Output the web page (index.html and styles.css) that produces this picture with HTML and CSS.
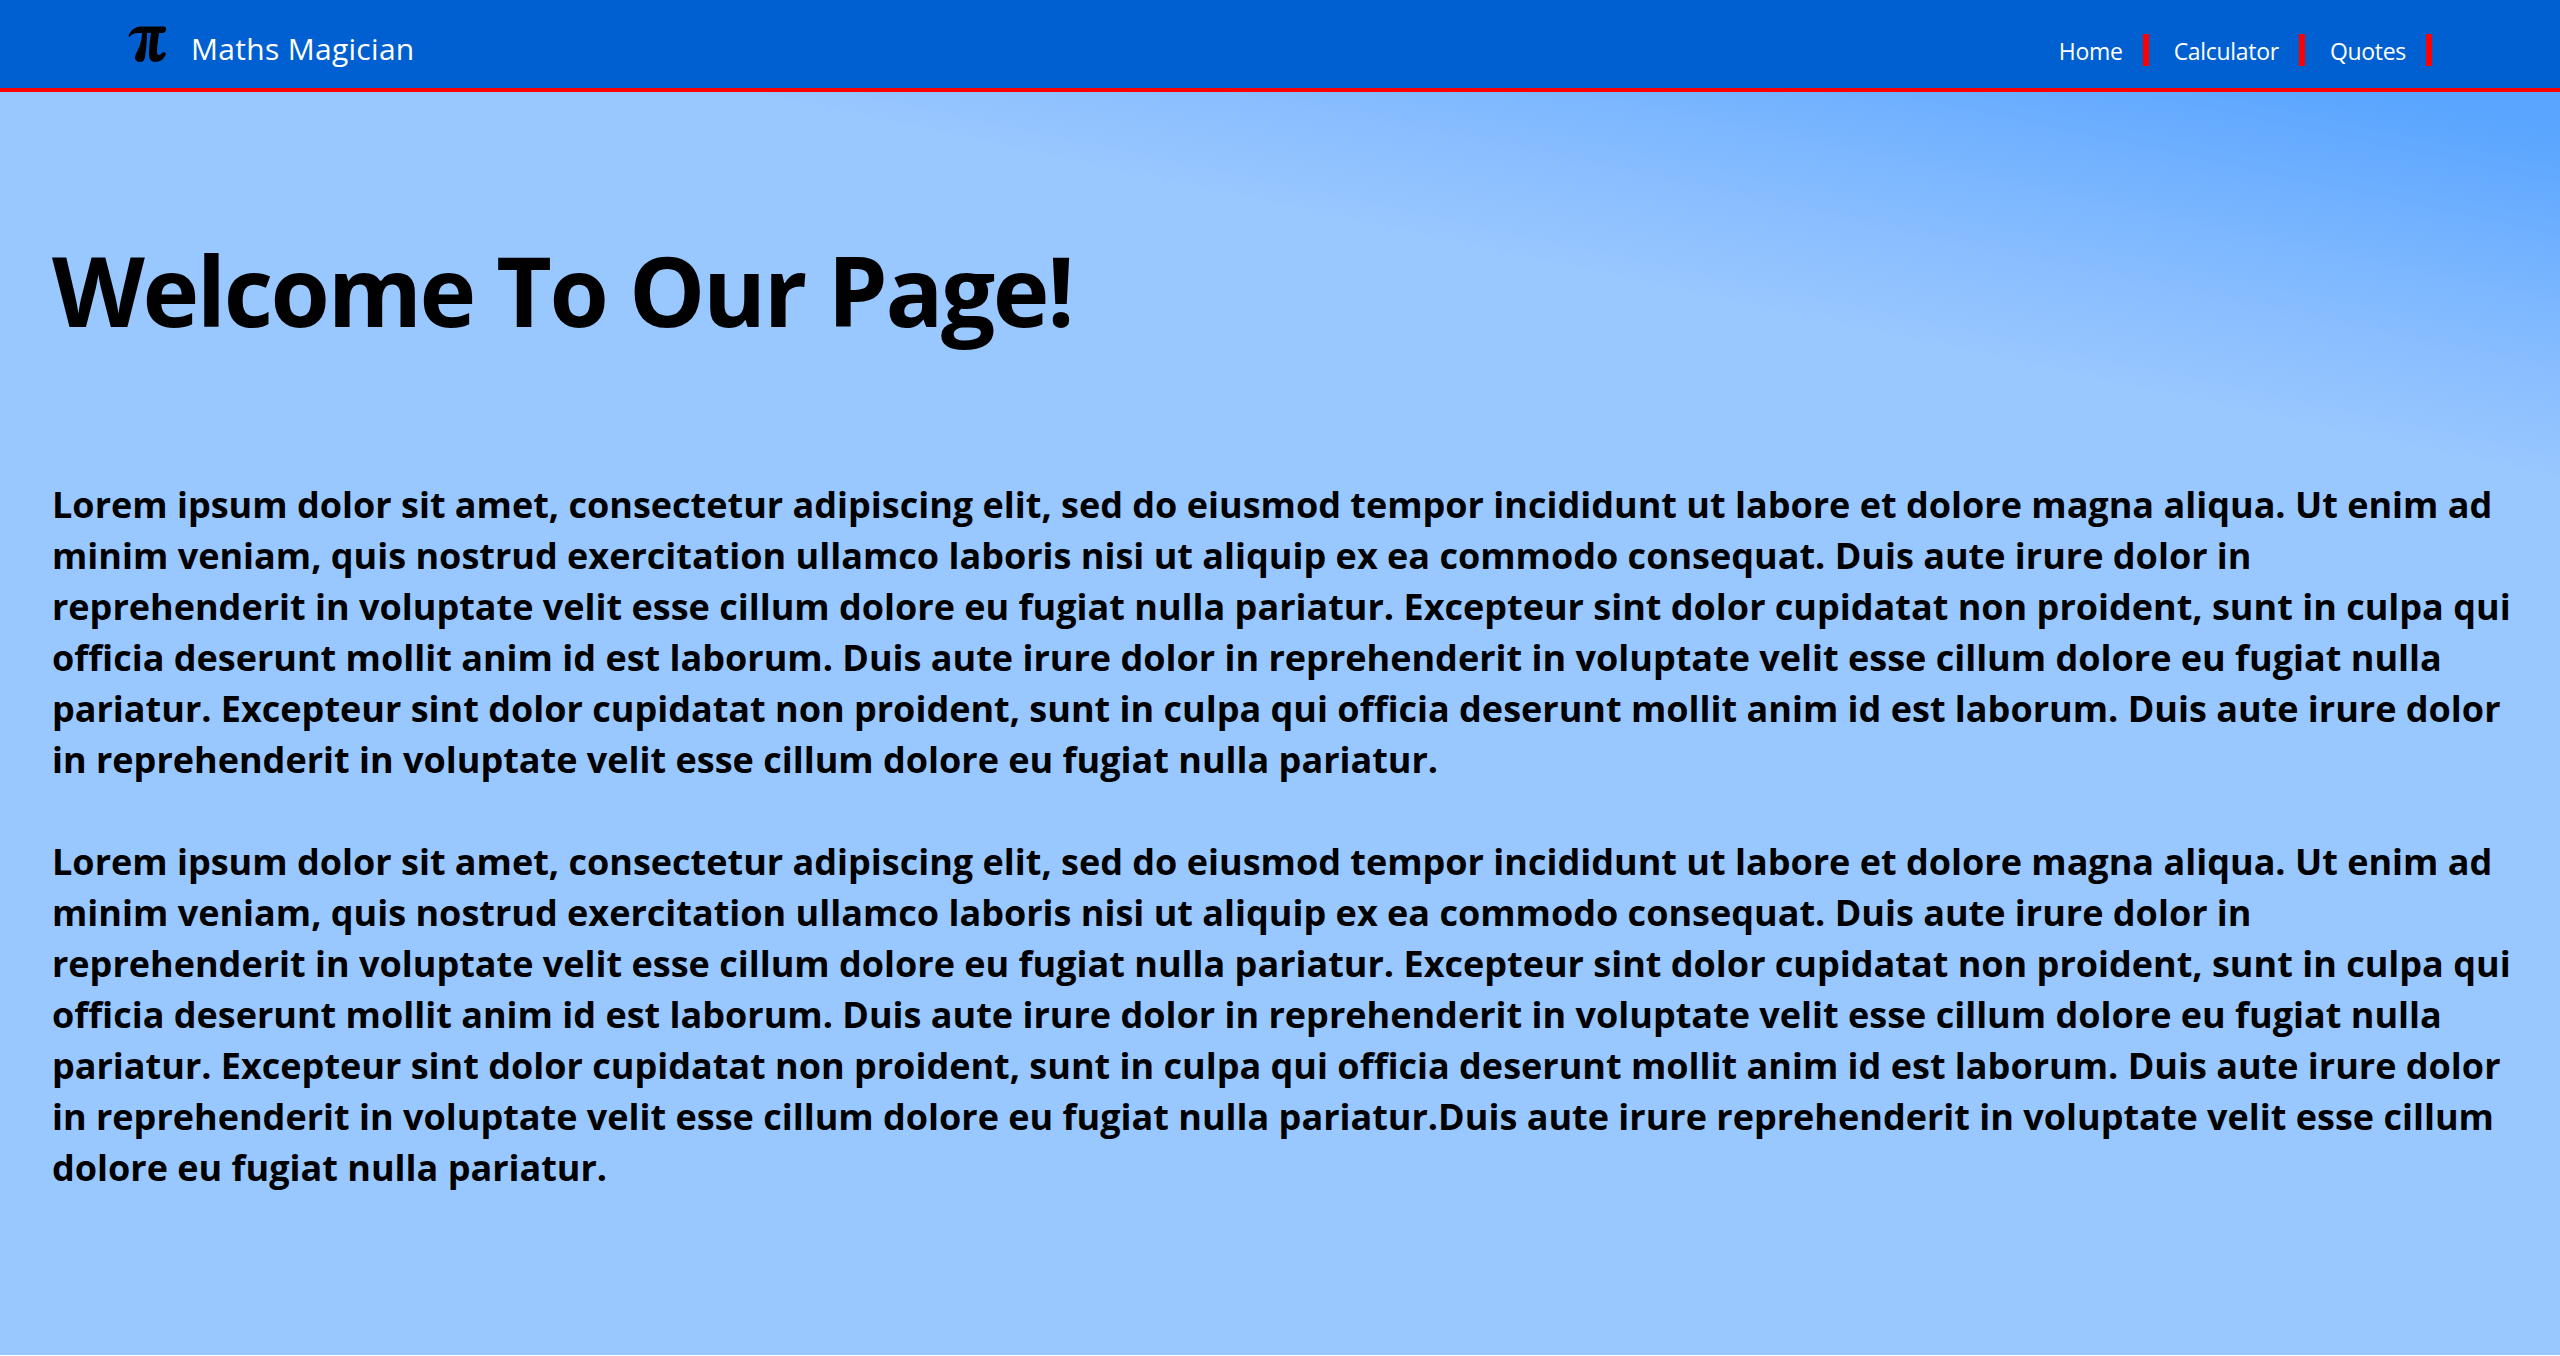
FILE: index.html
```html
<!DOCTYPE html>
<html lang="en">
<head>
    <meta charset="UTF-8">
    <meta name="viewport" content="width=device-width, initial-scale=1.0">
    <title>Maths Magician</title>
    <link rel="stylesheet" href="styles.css">
</head>
<body>
    <header class="navbar">
        <div class="brand">
            <svg class="brand-logo" viewBox="0 0 38 36" width="38" height="36" aria-hidden="true">
                <path d="M0.5 10 C3 4 7 0.5 13 0.5 H36 Q38 0.5 38 2 V4 Q37.5 7 34 7 H31 C30 14 29 20 29 26 Q29 29 31 29 Q33 29 35 26 L38 27 C37 32 33 36 27 36 C23 36 21 33 21 29 C21 20 22 14 23 7 H19 C19 16 18 24 17 31 C16.5 34 15 36 12 36 C9 36 7 34 7 32 C7 29 10 24 12 19 C13 15 14 11 14 7 H10 C6 7 3 9 1.5 11 Z"/>
            </svg>
            <span class="brand-name">Maths Magician</span>
        </div>
        <nav class="nav-links">
            <a href="#">Home</a>
            <a href="#">Calculator</a>
            <a href="#">Quotes</a>
        </nav>
    </header>

    <main class="content">
        <h1>Welcome To Our Page!</h1>
        <p>Lorem ipsum dolor sit amet, consectetur adipiscing elit, sed do eiusmod tempor incididunt ut labore et dolore magna aliqua. Ut enim ad minim veniam, quis nostrud exercitation ullamco laboris nisi ut aliquip ex ea commodo consequat. Duis aute irure dolor in reprehenderit in voluptate velit esse cillum dolore eu fugiat nulla pariatur. Excepteur sint dolor cupidatat non proident, sunt in culpa qui officia deserunt mollit anim id est laborum. Duis aute irure dolor in reprehenderit in voluptate velit esse cillum dolore eu fugiat nulla pariatur. Excepteur sint dolor cupidatat non proident, sunt in culpa qui officia deserunt mollit anim id est laborum. Duis aute irure dolor in reprehenderit in voluptate velit esse cillum dolore eu fugiat nulla pariatur.</p>
        <p>Lorem ipsum dolor sit amet, consectetur adipiscing elit, sed do eiusmod tempor incididunt ut labore et dolore magna aliqua. Ut enim ad minim veniam, quis nostrud exercitation ullamco laboris nisi ut aliquip ex ea commodo consequat. Duis aute irure dolor in reprehenderit in voluptate velit esse cillum dolore eu fugiat nulla pariatur. Excepteur sint dolor cupidatat non proident, sunt in culpa qui officia deserunt mollit anim id est laborum. Duis aute irure dolor in reprehenderit in voluptate velit esse cillum dolore eu fugiat nulla pariatur. Excepteur sint dolor cupidatat non proident, sunt in culpa qui officia deserunt mollit anim id est laborum. Duis aute irure dolor in reprehenderit in voluptate velit esse cillum dolore eu fugiat nulla pariatur.Duis aute irure reprehenderit in voluptate velit esse cillum dolore eu fugiat nulla pariatur.</p>
    </main>
</body>
</html>
```

FILE: styles.css
```css
html {
    background-color: #fff;
}

body {
    font-family: "Open Sans", sans-serif;
    margin: 0;
    height: 1355px;
    overflow: hidden;
    color: #000;
    background-color: #99c7ff;
    background-image: linear-gradient(192deg, #5aa5ff 130px, #84bbff 340px, #99c7ff 470px);
    background-repeat: no-repeat;
}

.navbar {
    display: flex;
    justify-content: space-between;
    align-items: center;
    height: 88px;
    padding: 0 128px;
    background-color: #0060d1;
    border-bottom: 4px solid #f00;
}

.brand {
    display: flex;
    align-items: center;
    gap: 25px;
}

.brand-name {
    color: #fff;
    font-size: 30px;
    letter-spacing: 0.3px;
    margin-top: 8px;
}

.nav-links {
    display: flex;
    margin-top: 12px;
}

.nav-links a {
    height: 32px;
    padding: 0 20px 0 25px;
    border-right: 6px solid #f00;
    color: #fff;
    font-size: 23px;
    line-height: 35px;
    letter-spacing: -0.3px;
    text-decoration: none;
}

.content {
    padding: 0 48px 0 52px;
}

h1 {
    margin: 140px 0 132px;
    font-size: 96px;
    line-height: 1.2;
    letter-spacing: -2.4px;
}

p {
    margin: 0 0 51px;
    font-size: 36px;
    font-weight: bold;
    line-height: 51px;
    letter-spacing: 0;
}
```
